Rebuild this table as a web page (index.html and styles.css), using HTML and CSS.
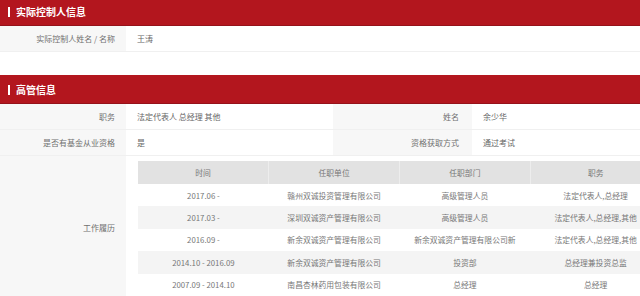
FILE: index.html
```html
<!DOCTYPE html>
<html lang="zh-CN">
<head>
<meta charset="utf-8">
<title>高管信息</title>
<link rel="stylesheet" href="styles.css">
</head>
<body>
<div class="page">
  <section class="sec sec-first">
    <h2 class="sec-title"><span class="bar"></span>实际控制人信息</h2>
    <div class="row row2">
      <div class="lbl">实际控制人姓名 / 名称</div>
      <div class="val">王涛</div>
    </div>
  </section>

  <section class="sec">
    <h2 class="sec-title"><span class="bar"></span>高管信息</h2>
    <div class="row row4">
      <div class="lbl">职务</div>
      <div class="val">法定代表人 总经理 其他</div>
      <div class="lbl">姓名</div>
      <div class="val">余少华</div>
    </div>
    <div class="row row4">
      <div class="lbl">是否有基金从业资格</div>
      <div class="val">是</div>
      <div class="lbl">资格获取方式</div>
      <div class="val">通过考试</div>
    </div>
    <div class="row row2 row-history">
      <div class="lbl lbl-mid">工作履历</div>
      <div class="val val-table">
        <table class="hist">
          <thead>
            <tr><th>时间</th><th>任职单位</th><th>任职部门</th><th>职务</th></tr>
          </thead>
          <tbody>
            <tr><td>2017.06 -</td><td>赣州双诚投资管理有限公司</td><td>高级管理人员</td><td>法定代表人,总经理</td></tr>
            <tr><td>2017.03 -</td><td>深圳双诚资产管理有限公司</td><td>高级管理人员</td><td>法定代表人,总经理,其他</td></tr>
            <tr><td>2016.09 -</td><td>新余双诚资产管理有限公司</td><td>新余双诚资产管理有限公司新</td><td>法定代表人,总经理,其他</td></tr>
            <tr><td>2014.10 - 2016.09</td><td>新余双诚资产管理有限公司</td><td>投资部</td><td>总经理兼投资总监</td></tr>
            <tr><td>2007.09 - 2014.10</td><td>南昌杏林药用包装有限公司</td><td>总经理</td><td>总经理</td></tr>
          </tbody>
        </table>
      </div>
    </div>
  </section>
</div>
</body>
</html>
```

FILE: styles.css
```css
html, body {
  margin: 0;
  padding: 0;
  overflow: hidden;
  background: #fff;
}

body {
  font-family: "Noto Sans CJK SC", "Noto Sans", sans-serif;
  font-size: 8px;
  color: #666;
}

.page {
  width: 670px;
  margin-top: -3px;
}

.sec-first {
  margin-bottom: 23px;
}

.sec-title {
  margin: 0;
  display: flex;
  align-items: center;
  background: #b3161e;
  border-bottom: 1px solid #95121a;
  color: #fff;
  font-size: 10px;
  font-weight: bold;
  padding-left: 8px;
  padding-top: 1px;
  box-sizing: border-box;
  height: 29px;
}

.bar {
  width: 2px;
  height: 10px;
  background: #fff;
  margin-right: 6px;
}

.row {
  display: grid;
  border-bottom: 1px solid #f0f0f0;
}

.row2 {
  grid-template-columns: 126px 1fr;
}

.row4 {
  grid-template-columns: 126px 207px 139px 1fr;
}

.lbl {
  background: #f7f7f7;
  text-align: right;
  padding-right: 11px;
  height: 25px;
  line-height: 25px;
  box-sizing: border-box;
  color: #707070;
}

.row4 .lbl:nth-child(3) {
  padding-right: 13px;
}

.val {
  padding-left: 11px;
  height: 25px;
  line-height: 25px;
}

.row-history .lbl {
  height: auto;
  display: flex;
  align-items: center;
  justify-content: flex-end;
  line-height: 1;
}

.val-table {
  height: auto;
  padding: 5px 9px 5px 12px;
  line-height: normal;
}

.hist {
  width: 100%;
  border-collapse: collapse;
  table-layout: fixed;
  color: #777;
  font-size: 7.8px;
}

.hist th {
  background: #e2e2e2;
  font-weight: normal;
  height: 23px;
  padding: 0;
  text-align: center;
  border-left: 1px solid #ededed;
}

.hist th:first-child {
  border-left: none;
}

.hist td {
  height: 22.4px;
  padding: 0;
  text-align: center;
  white-space: nowrap;
}

.hist tbody tr:nth-child(even) td {
  background: #f4f4f4;
}
```
